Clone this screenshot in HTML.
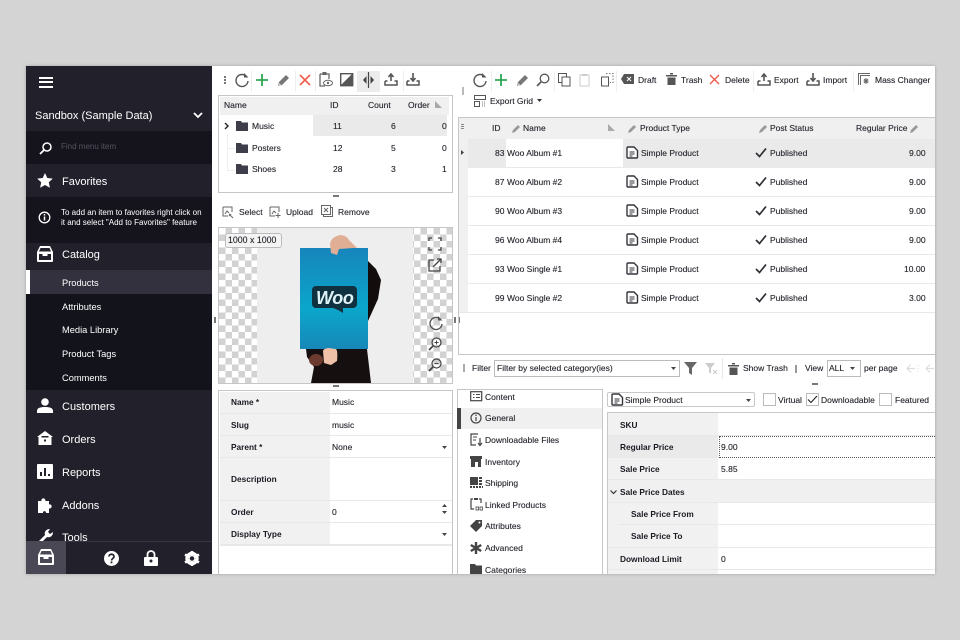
<!DOCTYPE html>
<html><head><meta charset="utf-8"><style>
html,body{margin:0;padding:0;width:960px;height:640px;overflow:hidden;background:#d4d4d4}
*{box-sizing:border-box}
body{font-family:"Liberation Sans",sans-serif;font-size:8.5px;color:#24242c;position:relative}
#w{position:absolute;left:26px;top:66px;width:909px;height:508px;background:#fff;overflow:hidden;box-shadow:0 0 3px rgba(0,0,0,.25);filter:blur(.3px)}
.a{position:absolute}
.t{position:absolute;white-space:nowrap;line-height:12px;height:12px;text-shadow:0 0 .5px rgba(36,36,44,.55)}
.s{color:#fff;font-size:9.3px;text-shadow:none}
.m{color:#fff;font-size:11px;line-height:14px;height:14px;text-shadow:none}
.b{font-weight:bold;font-size:8.3px;color:#1a1a22;text-shadow:none}
svg.i{position:absolute;overflow:visible}
.l{position:absolute;height:1px;background:#e8e8e8}
.dot{background-color:#eee;background-image:radial-gradient(#e0e0e0 .5px,transparent .6px);background-size:2px 2px}
.cb{position:absolute;width:13px;height:13px;border:1px solid #bbb;background:#fff}
</style></head><body>
<svg width="0" height="0" style="position:absolute"><defs>
<linearGradient id="pg" x1="0" y1="0" x2="0" y2="1"><stop offset="0" stop-color="#1685bb"/><stop offset=".6" stop-color="#0ba6cb"/><stop offset="1" stop-color="#1788b8"/></linearGradient>
<g id="ref"><path d="M12.5 4.500A6 6 0 1 0 14 9" fill="none" stroke="#555" stroke-width="1.400"/><path d="M10 1v4.500h4.500z" fill="#555"/></g>
<g id="plus"><path d="M7 1v12M1 7h12" stroke="#2aa852" stroke-width="1.800" fill="none"/></g>
<g id="pen"><path d="M2 13l1-4 7-7 3 3-7 7z" fill="#777"/><path d="M2.500 13l.7-3 2.300 2.300z" fill="#ccc"/></g>
<g id="x"><path d="M2 2l10 10M12 2L2 12" stroke="#ef5b4c" stroke-width="1.600" fill="none"/></g>
<g id="up"><path d="M1 9v4h12V9h-2.500M1 9h2.500" fill="none" stroke="#555" stroke-width="1.500"/><path d="M7 9V3M4.500 5L7 2l2.500 3" fill="none" stroke="#555" stroke-width="1.600"/></g>
<g id="dn"><path d="M1 9v4h12V9h-2.500M1 9h2.500" fill="none" stroke="#555" stroke-width="1.500"/><path d="M7 1v7M4.500 6L7 9l2.500-3" fill="none" stroke="#555" stroke-width="1.600"/></g>
<g id="doc"><path d="M1 2a1 1 0 0 1 1-1h6l3.500 3.500V11a1 1 0 0 1-1 1H2a1 1 0 0 1-1-1z" fill="#fff" stroke="#33333b" stroke-width="1.400"/><path d="M3.500 6h5M3.500 8h5M3.500 10h3" stroke="#33333b"/></g>
<g id="chk"><path d="M1 6l3.500 3.500L11 1.500" fill="none" stroke="#2e2e36" stroke-width="1.700"/></g>
<g id="edit"><path d="M1 10l1-3 5-5 2 2-5 5z" fill="#999"/></g>
<g id="fold"><path d="M0 1h5l1 1.500h6V11H0z" fill="#3e3d4a"/></g>
<g id="sel"><path d="M1 1h9v5M1 1v9h5" fill="none" stroke="#666"/><path d="M3 8l2-3 2 2" fill="none" stroke="#666"/></g>
</defs></svg>
<div id="w">
<!-- SIDEBAR -->
<div class="a" style="left:0;top:0;width:186px;height:508px;background:#22202b"></div>
<div class="a" style="left:0;top:65px;width:186px;height:33px;background:#15141d"></div>
<div class="a" style="left:0;top:131px;width:186px;height:46px;background:#15141d"></div>
<div class="a" style="left:0;top:204px;width:186px;height:120px;background:#13131c"></div>
<div class="a" style="left:0;top:204px;width:186px;height:24px;background:#33313e"></div>
<div class="a" style="left:0;top:204px;width:4px;height:24px;background:#fff"></div>
<div class="a" style="left:13px;top:11px;width:14px;height:2px;background:#fff"></div>
<div class="a" style="left:13px;top:15px;width:14px;height:2px;background:#fff"></div>
<div class="a" style="left:13px;top:20px;width:14px;height:2px;background:#fff"></div>
<span class="t m" style="left:9px;top:43px;font-size:11px">Sandbox (Sample Data)</span>
<svg class="i" style="left:167px;top:46px" width="10" height="7"><path d="M1 1l4 4 4-4" fill="none" stroke="#fff" stroke-width="1.800"/></svg>
<svg class="i" style="left:13px;top:75px" width="14" height="14"><circle cx="8" cy="6" r="4" fill="none" stroke="#fff" stroke-width="1.500"/><path d="M5 9l-4 4" stroke="#fff" stroke-width="1.800"/></svg>
<span class="t" style="left:35px;top:75px;color:#55535f;font-size:8px;text-shadow:none">Find menu item</span>
<svg class="i" style="left:11px;top:107px" width="16" height="15"><path d="M8 0l2.300 5 5.500.6-4 3.700 1.100 5.400L8 12l-4.900 2.700 1.100-5.400-4-3.700L5.700 5z" fill="#fff"/></svg>
<span class="t m" style="left:36px;top:109px">Favorites</span>
<svg class="i" style="left:12px;top:145px" width="13" height="13"><circle cx="6.500" cy="6.500" r="5.300" fill="none" stroke="#fff" stroke-width="1.300"/><path d="M6.500 5.500v4" stroke="#fff" stroke-width="1.500"/><path d="M6.500 3v1.500" stroke="#fff" stroke-width="1.500"/></svg>
<span class="t" style="left:35px;top:141px;color:#fff;font-size:8px;text-shadow:none">To add an item to favorites right click on</span>
<span class="t" style="left:35px;top:151px;color:#fff;font-size:8px;text-shadow:none">it and select "Add to Favorites" feature</span>
<svg class="i" style="left:11px;top:180px" width="16" height="16"><path d="M3 0h10l3 6v9a1 1 0 0 1-1 1H1a1 1 0 0 1-1-1V6z" fill="#fff"/><path d="M3.500 2h9l1.500 3.500H2zM2 8h3.500v2h5V8H14v6H2z" fill="#22202b"/></svg>
<span class="t m" style="left:36px;top:182px">Catalog</span>
<span class="t s" style="left:36px;top:211px">Products</span>
<span class="t s" style="left:36px;top:235px">Attributes</span>
<span class="t s" style="left:36px;top:258px">Media Library</span>
<span class="t s" style="left:36px;top:282px">Product Tags</span>
<span class="t s" style="left:36px;top:306px">Comments</span>
<svg class="i" style="left:11px;top:332px" width="16" height="16"><circle cx="8" cy="4" r="3.800" fill="#fff"/><path d="M0 15v-2c0-3 3-4 8-4s8 1 8 4v2z" fill="#fff"/></svg>
<span class="t m" style="left:36px;top:334px">Customers</span>
<svg class="i" style="left:11px;top:365px" width="16" height="15"><path d="M0 6l8-6 8 6h-1.500v8h-13V6z" fill="#fff"/><rect x="4.500" y="5" width="7" height="1.500" fill="#22202b"/><rect x="7" y="8.500" width="2" height="2" fill="#22202b"/></svg>
<span class="t m" style="left:36px;top:367px">Orders</span>
<svg class="i" style="left:11px;top:398px" width="16" height="15"><rect width="16" height="15" rx="1" fill="#fff"/><path d="M3 8h2v4H3zM7 4h2v8H7zM11 10h2v2h-2z" fill="#22202b"/></svg>
<span class="t m" style="left:36px;top:400px">Reports</span>
<svg class="i" style="left:12px;top:431px" width="15" height="16"><path d="M0 4h3.500c-1-3 4-4 4 0H11v3.500c3-1 4 4 0 4V16H8c.5-2.500-3.500-2.500-3 0H0z" fill="#fff"/></svg>
<span class="t m" style="left:36px;top:433px">Addons</span>
<svg class="i" style="left:12px;top:462px" width="15" height="13"><path d="M1 13l6-6c-1-3 1-6 5-6l-2 3 2 2 3-2c0 4-3 6-6 5l-5 5z" fill="#fff"/></svg>
<span class="t m" style="left:36px;top:465px">Tools</span>
<div class="a" style="left:0;top:475px;width:186px;height:33px;background:#22202b;border-top:1px solid #373540"></div>
<div class="a" style="left:0;top:475px;width:40px;height:33px;background:#4a4855"></div>
<svg class="i" style="left:12px;top:483px" width="16" height="16"><path d="M3 0h10l3 6v9a1 1 0 0 1-1 1H1a1 1 0 0 1-1-1V6z" fill="#fff"/><path d="M3.500 2h9l1.500 3.500H2zM2 8h3.500v2h5V8H14v6H2z" fill="#4a4855"/></svg>
<svg class="i" style="left:78px;top:485px" width="15" height="15"><circle cx="7.500" cy="7.500" r="7.500" fill="#fff"/><path d="M5 5.500c0-3 5-3 5 0 0 2-2.500 2-2.500 4" fill="none" stroke="#22202b" stroke-width="1.700"/><rect x="6.600" y="10.500" width="1.800" height="1.800" fill="#22202b"/></svg>
<svg class="i" style="left:118px;top:484px" width="14" height="16"><path d="M3.500 7V4.500a3.500 3.500 0 0 1 7 0V7" fill="none" stroke="#fff" stroke-width="1.800"/><rect y="7" width="14" height="9" rx="1" fill="#fff"/><circle cx="7" cy="11" r="1.500" fill="#22202b"/></svg>
<svg class="i" style="left:158px;top:485px" width="16" height="15"><circle cx="8" cy="7.500" r="5" fill="none" stroke="#fff" stroke-width="3.400"/><path d="M8 0v15M1 3.500l14 8M15 3.500l-14 8" stroke="#fff" stroke-width="2.600"/><circle cx="8" cy="7.500" r="2.200" fill="#22202b"/></svg>

<!-- LEFT TOOLBAR -->
<div class="a" style="left:198px;top:10px;width:2px;height:2px;background:#777"></div><div class="a" style="left:198px;top:13px;width:2px;height:2px;background:#777"></div><div class="a" style="left:198px;top:16px;width:2px;height:2px;background:#777"></div>
<svg class="i" style="left:208px;top:6px" width="15" height="15"><use href="#ref"/></svg>
<div class="a" style="left:225px;top:5px;width:1px;height:21px;background:#eee"></div>
<svg class="i" style="left:229px;top:7px" width="14" height="14"><use href="#plus"/></svg>
<svg class="i" style="left:250px;top:7px" width="14" height="14"><use href="#pen"/></svg>
<div class="a" style="left:269px;top:5px;width:1px;height:21px;background:#eee"></div>
<svg class="i" style="left:272px;top:7px" width="14" height="14"><use href="#x"/></svg>
<div class="a" style="left:289px;top:5px;width:1px;height:21px;background:#eee"></div>
<svg class="i" style="left:293px;top:6px" width="14" height="16"><path d="M1 2h9v5M1 2v12h5" fill="none" stroke="#666" stroke-width="1.300"/><rect x="3.500" y="0" width="4" height="3" fill="#666"/><ellipse cx="9" cy="11" rx="4.500" ry="2.800" fill="none" stroke="#666"/><circle cx="9" cy="11" r="1.200" fill="#666"/></svg>
<svg class="i" style="left:314px;top:7px" width="14" height="14"><rect x=".7" y=".7" width="12" height="12" fill="none" stroke="#555" stroke-width="1.400"/><path d="M1 12L12 1v11z" fill="#555"/></svg>
<div class="a" style="left:331px;top:5px;width:23px;height:21px;background:#ececec"></div>
<svg class="i" style="left:336px;top:6px" width="13" height="16"><path d="M6.500 0v16" stroke="#444" stroke-width="1.200"/><path d="M4.500 4v8L1 8zM8.500 4v8L12 8z" fill="#444"/></svg>
<svg class="i" style="left:358px;top:6px" width="14" height="14"><use href="#up"/></svg>
<div class="a" style="left:377px;top:5px;width:1px;height:21px;background:#eee"></div>
<svg class="i" style="left:380px;top:6px" width="14" height="14"><use href="#dn"/></svg>

<!-- TREE -->
<div class="a" style="left:192px;top:29px;width:235px;height:98px;border:1px solid #c6c6c6"></div>
<div class="a" style="left:194px;top:31px;width:229px;height:18px;background:#f0f0f0"></div>
<div class="a dot" style="left:287px;top:49px;width:134px;height:21px"></div>
<span class="t" style="left:198px;top:33px">Name</span><span class="t" style="left:304px;top:33px">ID</span><span class="t" style="left:342px;top:33px">Count</span><span class="t" style="left:382px;top:33px">Order</span>
<svg class="i" style="left:409px;top:35px" width="8" height="8"><path d="M0 7V0l7 7z" fill="#aaa"/></svg>
<svg class="i" style="left:198px;top:56px" width="6" height="8"><path d="M1 1l3 3-3 3" fill="none" stroke="#222" stroke-width="1.400"/></svg>
<svg class="i" style="left:210px;top:54px" width="12" height="12"><use href="#fold"/></svg>
<svg class="i" style="left:210px;top:76px" width="12" height="12"><use href="#fold"/></svg>
<svg class="i" style="left:210px;top:97px" width="12" height="12"><use href="#fold"/></svg>
<div class="a" style="left:201px;top:68px;width:1px;height:36px;background:#eee"></div>
<div class="a" style="left:201px;top:82px;width:8px;height:1px;background:#eee"></div><div class="a" style="left:201px;top:104px;width:8px;height:1px;background:#eee"></div>
<span class="t" style="left:226px;top:54px">Music</span><span class="t" style="left:226px;top:76px">Posters</span><span class="t" style="left:226px;top:97px">Shoes</span>
<span class="t" style="left:307px;top:54px">11</span><span class="t" style="left:307px;top:76px">12</span><span class="t" style="left:307px;top:97px">28</span>
<span class="t" style="left:365px;top:54px">6</span><span class="t" style="left:365px;top:76px">5</span><span class="t" style="left:365px;top:97px">3</span>
<span class="t" style="left:416px;top:54px">0</span><span class="t" style="left:416px;top:76px">0</span><span class="t" style="left:416px;top:97px">1</span>
<div class="a" style="left:307px;top:129px;width:6px;height:2px;background:#777"></div>

<!-- Select Upload Remove -->
<svg class="i" style="left:196px;top:140px" width="12" height="13"><use href="#sel"/><path d="M7 8l4 4M9 8l-2 2" stroke="#666"/></svg>
<span class="t" style="left:213px;top:140px">Select</span>
<svg class="i" style="left:243px;top:140px" width="12" height="13"><use href="#sel"/><path d="M9 7v5M6.500 9.500h5" stroke="#666"/></svg>
<span class="t" style="left:260px;top:140px">Upload</span>
<svg class="i" style="left:295px;top:139px" width="12" height="13"><rect x="2.500" y="2.500" width="9" height="9" fill="none" stroke="#666"/><rect x=".5" y=".5" width="9" height="9" fill="#fff" stroke="#666"/><path d="M3 3l4 4M7 3L3 7" stroke="#666"/></svg>
<span class="t" style="left:312px;top:140px">Remove</span>

<!-- IMAGE -->
<div class="a" style="left:192px;top:161px;width:235px;height:157px;border:1px solid #c6c6c6;background-color:#fff;background-image:conic-gradient(#d2d2d2 25%,#fff 0 50%,#d2d2d2 0 75%,#fff 0);background-size:13px 13px;overflow:hidden">
<div class="a" style="left:38px;top:0;width:156px;height:155px;background:#eee"></div>
<svg class="i" style="left:-219px;top:-229px" width="960" height="640">
<path d="M368 262L376 270 381 281 378 300 368 322Z" fill="#120c0c"/>
<path d="M306 350H367L371 384H311L314 368 307 358Z" fill="#150f0f"/>
<rect x="300" y="249" width="68" height="101" fill="url(#pg)"/>
<path d="M330 245Q331 238 340 236 346 236 349 241L357 249H353L339 250 337 256 331 254Z" fill="#dfae95"/>
<ellipse cx="316" cy="361" rx="7" ry="6" fill="#6c3a2e"/>
<path d="M323 352Q323 350 328 349L336 350Q338 352 337 362L331 366 324 364Z" fill="#efc2a8"/>
<rect x="312" y="287" width="45" height="22" rx="4" fill="#10313f"/>
<path d="M333 309h10l0 5-5-3z" fill="#10313f"/>
</svg></div>
<span class="a" style="left:290px;top:221px;font:italic bold 18px/22px 'Liberation Sans',sans-serif;color:#dff2f7;letter-spacing:-.4px;white-space:nowrap">Woo</span>
<div class="a" style="left:199px;top:167px;width:57px;height:15px;background:#f4f4f4;border:1px solid #bbb;border-radius:3px"></div>
<span class="t" style="left:202px;top:168px;font-size:8.8px">1000 x 1000</span>
<svg class="i" style="left:402px;top:171px" width="14" height="14"><path d="M1 4V1h3M10 1h3v3M13 10v3h-3M4 13H1v-3" fill="none" stroke="#444" stroke-width="1.300"/></svg>
<svg class="i" style="left:402px;top:192px" width="14" height="14"><path d="M6 2H1v11h11V8" fill="none" stroke="#444" stroke-width="1.300"/><path d="M5 9l8-8M9 1h4v4" fill="none" stroke="#444" stroke-width="1.300"/></svg>
<svg class="i" style="left:402px;top:249px" width="15" height="15"><use href="#ref"/></svg>
<svg class="i" style="left:402px;top:271px" width="14" height="14"><circle cx="8.500" cy="5.500" r="4.500" fill="none" stroke="#444" stroke-width="1.200"/><path d="M5 9l-4 4" stroke="#444" stroke-width="1.700"/><path d="M6.500 5.500h4M8.500 3.500v4" stroke="#444"/></svg>
<svg class="i" style="left:402px;top:292px" width="14" height="14"><circle cx="8.500" cy="5.500" r="4.500" fill="none" stroke="#444" stroke-width="1.200"/><path d="M5 9l-4 4" stroke="#444" stroke-width="1.700"/><path d="M6.500 5.500h4" stroke="#444"/></svg>
<div class="a" style="left:188px;top:251px;width:2px;height:6px;background:#777"></div>
<div class="a" style="left:428px;top:251px;width:2px;height:6px;background:#777"></div>
<div class="a" style="left:307px;top:319px;width:6px;height:2px;background:#777"></div>

<!-- CATEGORY FORM -->
<div class="a" style="left:192px;top:324px;width:235px;height:184px;border:1px solid #c6c6c6;border-bottom:0"></div>
<div class="a" style="left:194px;top:326px;width:110px;height:154px;background:#f1f1f1"></div>
<div class="l" style="left:194px;top:347px;width:232px"></div><div class="l" style="left:194px;top:369px;width:232px"></div><div class="l" style="left:194px;top:391px;width:232px"></div><div class="l" style="left:194px;top:434px;width:232px"></div><div class="l" style="left:194px;top:456px;width:232px"></div><div class="l" style="left:194px;top:478px;width:232px;height:2px"></div>
<span class="t b" style="left:205px;top:330px">Name *</span><span class="t b" style="left:205px;top:353px">Slug</span><span class="t b" style="left:205px;top:375px">Parent *</span><span class="t b" style="left:205px;top:407px">Description</span><span class="t b" style="left:205px;top:440px">Order</span><span class="t b" style="left:205px;top:462px">Display Type</span>
<span class="t" style="left:306px;top:330px">Music</span><span class="t" style="left:306px;top:353px">music</span><span class="t" style="left:306px;top:375px">None</span><span class="t" style="left:306px;top:440px">0</span>
<svg class="i" style="left:416px;top:380px" width="6" height="3"><path d="M0 0h5L2.500 3z" fill="#444"/></svg>
<svg class="i" style="left:416px;top:467px" width="6" height="3"><path d="M0 0h5L2.500 3z" fill="#444"/></svg>
<svg class="i" style="left:416px;top:438px" width="6" height="3"><path d="M0 3h5L2.500 0z" fill="#444"/></svg>
<svg class="i" style="left:416px;top:445px" width="6" height="3"><path d="M0 0h5L2.500 3z" fill="#444"/></svg>

<!-- RIGHT TOOLBAR -->
<div class="a" style="left:432px;top:251px;width:2px;height:6px;background:#777"></div>
<div class="a" style="left:436px;top:21px;width:2px;height:8px;background:#bbb"></div>
<svg class="i" style="left:446px;top:6px" width="15" height="15"><use href="#ref"/></svg>
<div class="a" style="left:465px;top:5px;width:1px;height:21px;background:#eee"></div>
<svg class="i" style="left:468px;top:7px" width="14" height="14"><use href="#plus"/></svg>
<svg class="i" style="left:489px;top:7px" width="14" height="14"><use href="#pen"/></svg>
<svg class="i" style="left:510px;top:7px" width="14" height="14"><circle cx="8.500" cy="5.500" r="4.300" fill="none" stroke="#555" stroke-width="1.300"/><path d="M5 9l-4 4" stroke="#555" stroke-width="1.600"/></svg>
<div class="a" style="left:528px;top:5px;width:1px;height:21px;background:#eee"></div>
<svg class="i" style="left:532px;top:7px" width="13" height="14"><rect x=".5" y=".5" width="8" height="9" fill="none" stroke="#555"/><rect x="4" y="4" width="8" height="9" fill="#fff" stroke="#555"/></svg>
<svg class="i" style="left:553px;top:7px" width="12" height="14"><rect x="1" y="2" width="9" height="11" fill="none" stroke="#ccc"/><rect x="3" y="1" width="5" height="2" fill="#ccc"/></svg>
<svg class="i" style="left:575px;top:7px" width="13" height="14"><rect x=".5" y="4" width="7" height="9" fill="none" stroke="#555"/><path d="M5 .5h7v9H9" fill="none" stroke="#777" stroke-dasharray="1.500 1.500"/></svg>
<div class="a" style="left:590px;top:5px;width:1px;height:21px;background:#eee"></div>
<svg class="i" style="left:595px;top:8px" width="13" height="10"><path d="M3 0h10v10H3L0 5z" fill="#555"/><path d="M6 3l4 4M10 3L6 7" stroke="#fff"/></svg>
<span class="t" style="left:612px;top:8px">Draft</span>
<svg class="i" style="left:640px;top:7px" width="11" height="12"><path d="M0 2h11v1.500H0zM4 0h3v1.500H4zM1.500 4.500h8V12h-8z" fill="#555"/></svg>
<span class="t" style="left:655px;top:8px">Trash</span>
<svg class="i" style="left:683px;top:8px" width="11" height="11"><path d="M1 1l9 9M10 1L1 10" stroke="#ef5b4c" stroke-width="1.400"/></svg>
<span class="t" style="left:699px;top:8px">Delete</span>
<div class="a" style="left:727px;top:5px;width:1px;height:21px;background:#eee"></div>
<svg class="i" style="left:731px;top:6px" width="14" height="14"><use href="#up"/></svg>
<span class="t" style="left:748px;top:8px">Export</span>
<svg class="i" style="left:780px;top:6px" width="14" height="14"><use href="#dn"/></svg>
<span class="t" style="left:797px;top:8px">Import</span>
<div class="a" style="left:827px;top:5px;width:1px;height:21px;background:#eee"></div>
<svg class="i" style="left:832px;top:7px" width="12" height="13"><path d="M.5 12V.5H12M2.500 12V2.500H12" fill="none" stroke="#666"/><path d="M8 5v6M5.500 8h5M6 6l4 4M10 6l-4 4" stroke="#666"/></svg>
<span class="t" style="left:849px;top:8px">Mass Changer</span>
<svg class="i" style="left:448px;top:29px" width="12" height="13"><path d="M.5.5h11v4H.5zM.5 6.500h5v5h-5z" fill="none" stroke="#555"/><path d="M8 7h4M8 9h4M8 11h4" stroke="#777" stroke-dasharray="1 1"/></svg>
<span class="t" style="left:464px;top:29px">Export Grid</span>
<svg class="i" style="left:511px;top:33px" width="5" height="3"><path d="M0 0h5L2.500 3z" fill="#333"/></svg>

<!-- GRID -->
<div class="a" style="left:432px;top:51px;width:477px;height:238px;border:1px solid #c6c6c6;border-right:0"></div>
<div class="a" style="left:433px;top:52px;width:476px;height:21px;background:#f0f0f0"></div>
<div class="a" style="left:433px;top:73px;width:9px;height:174px;background:#f0f0f0"></div>
<div class="a dot" style="left:442px;top:73px;width:467px;height:29px"></div>
<div class="a" style="left:480px;top:73px;width:117px;height:29px;background:#fff"></div>
<div class="a" style="left:435px;top:58px;width:3px;height:1px;background:#888;box-shadow:0 2px #888,0 4px #888"></div>
<svg class="i" style="left:435px;top:84px" width="3" height="5"><path d="M0 0l3 2.500L0 5z" fill="#444"/></svg>
<span class="t" style="left:466px;top:56px">ID</span>
<svg class="i" style="left:485px;top:57px" width="10" height="11"><use href="#edit"/></svg>
<span class="t" style="left:497px;top:56px">Name</span>
<svg class="i" style="left:582px;top:58px" width="8" height="8"><path d="M0 7V0l7 7z" fill="#aaa"/></svg>
<svg class="i" style="left:601px;top:57px" width="10" height="11"><use href="#edit"/></svg>
<span class="t" style="left:614px;top:56px">Product Type</span>
<svg class="i" style="left:732px;top:57px" width="10" height="11"><use href="#edit"/></svg>
<span class="t" style="left:744px;top:56px">Post Status</span>
<span class="t" style="left:830px;top:56px">Regular Price</span>
<svg class="i" style="left:883px;top:57px" width="10" height="11"><use href="#edit"/></svg>
<div class="l" style="left:442px;top:101px;width:467px"></div><div class="l" style="left:442px;top:130px;width:467px"></div><div class="l" style="left:442px;top:159px;width:467px"></div><div class="l" style="left:442px;top:188px;width:467px"></div><div class="l" style="left:442px;top:217px;width:467px"></div><div class="l" style="left:433px;top:246px;width:476px"></div>

<span class="t" style="left:469px;top:81px">83</span><span class="t" style="left:481px;top:81px">Woo Album #1</span>
<svg class="i" style="left:600px;top:80px" width="12" height="13"><use href="#doc"/></svg><span class="t" style="left:615px;top:81px">Simple Product</span>
<svg class="i" style="left:729px;top:81px" width="12" height="11"><use href="#chk"/></svg><span class="t" style="left:744px;top:81px">Published</span><span class="t" style="left:883px;top:81px">9.00</span>

<span class="t" style="left:469px;top:110px">87</span><span class="t" style="left:481px;top:110px">Woo Album #2</span>
<svg class="i" style="left:600px;top:109px" width="12" height="13"><use href="#doc"/></svg><span class="t" style="left:615px;top:110px">Simple Product</span>
<svg class="i" style="left:729px;top:110px" width="12" height="11"><use href="#chk"/></svg><span class="t" style="left:744px;top:110px">Published</span><span class="t" style="left:883px;top:110px">9.00</span>

<span class="t" style="left:469px;top:139px">90</span><span class="t" style="left:481px;top:139px">Woo Album #3</span>
<svg class="i" style="left:600px;top:138px" width="12" height="13"><use href="#doc"/></svg><span class="t" style="left:615px;top:139px">Simple Product</span>
<svg class="i" style="left:729px;top:139px" width="12" height="11"><use href="#chk"/></svg><span class="t" style="left:744px;top:139px">Published</span><span class="t" style="left:883px;top:139px">9.00</span>

<span class="t" style="left:469px;top:168px">96</span><span class="t" style="left:481px;top:168px">Woo Album #4</span>
<svg class="i" style="left:600px;top:167px" width="12" height="13"><use href="#doc"/></svg><span class="t" style="left:615px;top:168px">Simple Product</span>
<svg class="i" style="left:729px;top:168px" width="12" height="11"><use href="#chk"/></svg><span class="t" style="left:744px;top:168px">Published</span><span class="t" style="left:883px;top:168px">9.00</span>

<span class="t" style="left:469px;top:197px">93</span><span class="t" style="left:481px;top:197px">Woo Single #1</span>
<svg class="i" style="left:600px;top:196px" width="12" height="13"><use href="#doc"/></svg><span class="t" style="left:615px;top:197px">Simple Product</span>
<svg class="i" style="left:729px;top:197px" width="12" height="11"><use href="#chk"/></svg><span class="t" style="left:744px;top:197px">Published</span><span class="t" style="left:878px;top:197px">10.00</span>

<span class="t" style="left:469px;top:226px">99</span><span class="t" style="left:481px;top:226px">Woo Single #2</span>
<svg class="i" style="left:600px;top:225px" width="12" height="13"><use href="#doc"/></svg><span class="t" style="left:615px;top:226px">Simple Product</span>
<svg class="i" style="left:729px;top:226px" width="12" height="11"><use href="#chk"/></svg><span class="t" style="left:744px;top:226px">Published</span><span class="t" style="left:883px;top:226px">3.00</span>

<!-- FILTER -->
<div class="a" style="left:437px;top:298px;width:2px;height:8px;background:#aaa"></div>
<span class="t" style="left:446px;top:296px">Filter</span>
<div class="a" style="left:468px;top:294px;width:186px;height:17px;border:1px solid #bbb"></div>
<span class="t" style="left:471px;top:296px">Filter by selected category(ies)</span>
<svg class="i" style="left:645px;top:301px" width="5" height="3"><path d="M0 0h5L2.500 3z" fill="#444"/></svg>
<svg class="i" style="left:658px;top:296px" width="13" height="13"><path d="M0 0h13L8 6v7l-3-2V6z" fill="#666"/></svg>
<svg class="i" style="left:679px;top:297px" width="13" height="12"><path d="M0 0h10L6 5v6L4 9V5z" fill="#ccc"/><path d="M8 7l4 4M12 7l-4 4" stroke="#ccc"/></svg>
<div class="a" style="left:696px;top:292px;width:1px;height:21px;background:#e8e8e8"></div>
<svg class="i" style="left:702px;top:297px" width="11" height="12"><path d="M0 2h11v1.500H0zM4 0h3v1.500H4zM1.500 4.500h8V12h-8z" fill="#555"/></svg>
<span class="t" style="left:717px;top:296px">Show Trash</span>
<div class="a" style="left:769px;top:299px;width:2px;height:8px;background:#999"></div>
<span class="t" style="left:779px;top:296px">View</span>
<div class="a" style="left:801px;top:294px;width:34px;height:17px;border:1px solid #bbb"></div>
<span class="t" style="left:803px;top:296px">ALL</span>
<svg class="i" style="left:824px;top:301px" width="5" height="3"><path d="M0 0h5L2.500 3z" fill="#444"/></svg>
<span class="t" style="left:838px;top:296px">per page</span>
<svg class="i" style="left:880px;top:298px" width="14" height="9"><path d="M5 .5L1 4.500l4 4M1 4.500h8" fill="none" stroke="#ddd" stroke-width="1.200"/><path d="M12 1v1M12 4v1M12 7v1" stroke="#ddd"/></svg>
<svg class="i" style="left:899px;top:298px" width="10" height="9"><path d="M5 .5L1 4.500l4 4M1 4.500h8" fill="none" stroke="#ddd" stroke-width="1.200"/></svg>
<div class="a" style="left:786px;top:317px;width:6px;height:2px;background:#777"></div>

<!-- PRODUCT NAV -->
<div class="a" style="left:431px;top:323px;width:146px;height:185px;border:1px solid #c6c6c6;border-bottom:0"></div>
<div class="a" style="left:433px;top:342px;width:143px;height:21px;background:#f0f0f0"></div>
<div class="a" style="left:431px;top:342px;width:4px;height:21px;background:#444"></div>
<svg class="i" style="left:444px;top:325px" width="13" height="11"><rect x=".7" y=".7" width="11" height="9" fill="none" stroke="#444" stroke-width="1.200"/><path d="M3 3.500h1.500M6 3.500h4M3 6.500h1.500M6 6.500h4" stroke="#444"/></svg>
<span class="t" style="left:459px;top:325px">Content</span>
<svg class="i" style="left:444px;top:346px" width="12" height="12"><circle cx="6" cy="6" r="5" fill="none" stroke="#444" stroke-width="1.200"/><path d="M6 5v4M6 2.500V4" stroke="#444" stroke-width="1.200"/></svg>
<span class="t" style="left:459px;top:346px">General</span>
<svg class="i" style="left:444px;top:367px" width="13" height="13"><path d="M8 1H1v11h5" fill="none" stroke="#444" stroke-width="1.200"/><path d="M3 4h4M3 7h3" stroke="#444"/><path d="M10 5v7M8 10l2 2.500 2-2.500" fill="none" stroke="#444" stroke-width="1.200"/></svg>
<span class="t" style="left:459px;top:368px">Downloadable Files</span>
<svg class="i" style="left:444px;top:390px" width="12" height="11"><path d="M0 0h12v3H0zM1 3h10v8h-3V6H5v5H1z" fill="#444"/></svg>
<span class="t" style="left:459px;top:390px">Inventory</span>
<svg class="i" style="left:444px;top:411px" width="13" height="12"><rect x="0" y="0" width="8" height="8" fill="#444"/><rect x="9" y="0" width="3" height="2" fill="#444"/><rect x="9" y="3" width="3" height="2" fill="#444"/><rect x="9" y="6" width="3" height="2" fill="#444"/><path d="M0 10h13" stroke="#444" stroke-width="2" stroke-dasharray="2 1"/></svg>
<span class="t" style="left:459px;top:411px">Shipping</span>
<svg class="i" style="left:444px;top:432px" width="13" height="13"><path d="M3 1H1v10h3M9 1h2v4" fill="none" stroke="#444" stroke-width="1.200"/><rect x="4" y="0" width="4" height="2" fill="#444"/><rect x="6" y="9" width="2.500" height="3" fill="none" stroke="#444" stroke-width=".8"/><rect x="10" y="9" width="2.500" height="3" fill="none" stroke="#444" stroke-width=".8"/></svg>
<span class="t" style="left:459px;top:433px">Linked Products</span>
<svg class="i" style="left:444px;top:454px" width="12" height="12"><path d="M6 0h6v6l-6 6-6-6z" fill="#444"/><circle cx="9.500" cy="2.500" r="1" fill="#fff"/></svg>
<span class="t" style="left:459px;top:454px">Attributes</span>
<svg class="i" style="left:444px;top:476px" width="12" height="12"><path d="M6 0v12M.8 3l10.400 6M11.200 3L.8 9" stroke="#444" stroke-width="2.400"/></svg>
<span class="t" style="left:459px;top:476px">Advanced</span>
<svg class="i" style="left:444px;top:497px" width="12" height="12"><path d="M0 1h5l1 1.500h6V11H0z" fill="#444"/></svg>
<span class="t" style="left:459px;top:498px">Categories</span>

<!-- PRODUCT DETAILS -->
<div class="a" style="left:581px;top:326px;width:148px;height:15px;border:1px solid #c8c8c8;border-radius:2px"></div>
<svg class="i" style="left:585px;top:327px" width="12" height="13"><use href="#doc"/></svg>
<span class="t" style="left:599px;top:328px">Simple Product</span>
<svg class="i" style="left:720px;top:333px" width="5" height="3"><path d="M0 0h5L2.500 3z" fill="#444"/></svg>
<div class="cb" style="left:737px;top:327px"></div>
<span class="t" style="left:752px;top:328px">Virtual</span>
<div class="cb" style="left:780px;top:327px"></div>
<svg class="i" style="left:781px;top:329px" width="11" height="9"><path d="M1 4.500l3 3L10 1" fill="none" stroke="#222" stroke-width="1.100"/></svg>
<span class="t" style="left:795px;top:328px">Downloadable</span>
<div class="cb" style="left:853px;top:327px"></div>
<span class="t" style="left:869px;top:328px">Featured</span>

<div class="a" style="left:581px;top:346px;width:328px;height:162px;border:1px solid #c8c8c8;border-right:0;border-bottom:0"></div>
<div class="a" style="left:582px;top:347px;width:110px;height:161px;background:#f1f1f1"></div>
<div class="a dot" style="left:582px;top:370px;width:110px;height:22px"></div>
<div class="a" style="left:582px;top:414px;width:327px;height:22px;background:#f0f0f0"></div>
<div class="l" style="left:582px;top:369px;width:327px"></div><div class="l" style="left:582px;top:391px;width:327px"></div><div class="l" style="left:582px;top:413px;width:327px"></div><div class="l" style="left:582px;top:436px;width:327px"></div><div class="l" style="left:593px;top:458px;width:316px"></div><div class="l" style="left:582px;top:481px;width:327px"></div><div class="l" style="left:582px;top:503px;width:327px"></div>
<div class="a" style="left:693px;top:370px;width:216px;height:22px;border:1px dotted #555;border-right:0;background:#fff"></div>
<span class="t b" style="left:594px;top:353px">SKU</span><span class="t b" style="left:594px;top:375px">Regular Price</span><span class="t b" style="left:594px;top:397px">Sale Price</span><span class="t b" style="left:594px;top:420px">Sale Price Dates</span><span class="t b" style="left:605px;top:442px">Sale Price From</span><span class="t b" style="left:605px;top:464px">Sale Price To</span><span class="t b" style="left:594px;top:487px">Download Limit</span>
<svg class="i" style="left:584px;top:424px" width="7" height="5"><path d="M.5.5l3 3 3-3" fill="none" stroke="#333" stroke-width="1.200"/></svg>
<span class="t" style="left:695px;top:375px">9.00</span><span class="t" style="left:695px;top:397px">5.85</span><span class="t" style="left:695px;top:487px">0</span>
</div>
</body></html>
